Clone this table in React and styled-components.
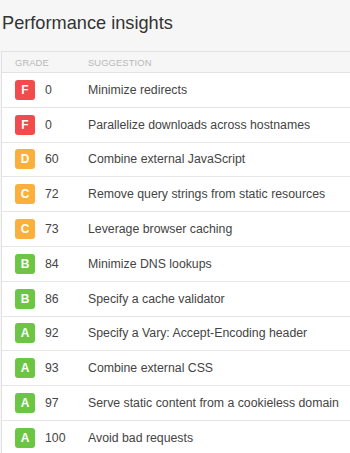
import React from "react";
import styled, { createGlobalStyle } from "styled-components";

const GlobalStyle = createGlobalStyle`
    html, body {
        margin: 0;
        padding: 0;
        background-color: #f6f6f6;
        font-family: "Liberation Sans", Arial, sans-serif;
    }
`;

const PAGE = styled.div`
    display: flex;
    flex-direction: column;
    padding: 12px 0 0 1px;
`;

const TITLE = styled.h2`
    margin: 0 0 17px 1px;
    font-size: 18.2px;
    line-height: 22px;
    font-weight: normal;
    color: #333;
`;

const TABLE = styled.div`
    display: flex;
    flex-direction: column;
    border-top: 1px solid #e2e2e2;
    border-left: 1px solid #e2e2e2;
    background-color: #fff;
`;

const HEADER = styled.div`
    display: grid;
    grid-template-columns: 73px 1fr;
    align-items: center;
    height: 20px;
    padding-left: 13px;
    background-color: #f6f6f6;
    border-bottom: 1px solid #e2e2e2;
    font-size: 9.4px;
    color: #b8b8b8;
    letter-spacing: 0.1px;
`;

const ROW = styled.div`
    display: grid;
    grid-template-columns: 30px 43px 1fr;
    align-items: center;
    height: 34.8px;
    box-sizing: border-box;
    padding-left: 13px;
    border-bottom: 1px solid #e6e6e6;
    font-size: 12.3px;
    color: #444;
`;

const colors = {
    F: "#f24b4b",
    D: "#fcb03c",
    C: "#fcb03c",
    B: "#6cc644",
    A: "#6cc644",
};

const BADGE = styled.span`
    display: flex;
    align-items: center;
    justify-content: center;
    width: 20px;
    height: 20px;
    border-radius: 3px;
    background-color: ${(props) => colors[props.grade]};
    color: #fff;
    font-weight: bold;
    font-size: 12px;
`;

const insights = [
    ["F", 0, "Minimize redirects"],
    ["F", 0, "Parallelize downloads across hostnames"],
    ["D", 60, "Combine external JavaScript"],
    ["C", 72, "Remove query strings from static resources"],
    ["C", 73, "Leverage browser caching"],
    ["B", 84, "Minimize DNS lookups"],
    ["B", 86, "Specify a cache validator"],
    ["A", 92, "Specify a Vary: Accept-Encoding header"],
    ["A", 93, "Combine external CSS"],
    ["A", 97, "Serve static content from a cookieless domain"],
    ["A", 100, "Avoid bad requests"],
];

const App = () => {
    return (
        <PAGE>
            <GlobalStyle />
            <TITLE>Performance insights</TITLE>
            <TABLE>
                <HEADER>
                    <span>GRADE</span>
                    <span>SUGGESTION</span>
                </HEADER>
                {insights.map(([grade, score, text]) => (
                    <ROW key={text}>
                        <BADGE grade={grade}>{grade}</BADGE>
                        <span>{score}</span>
                        <span>{text}</span>
                    </ROW>
                ))}
            </TABLE>
        </PAGE>
    );
};

export default App;
